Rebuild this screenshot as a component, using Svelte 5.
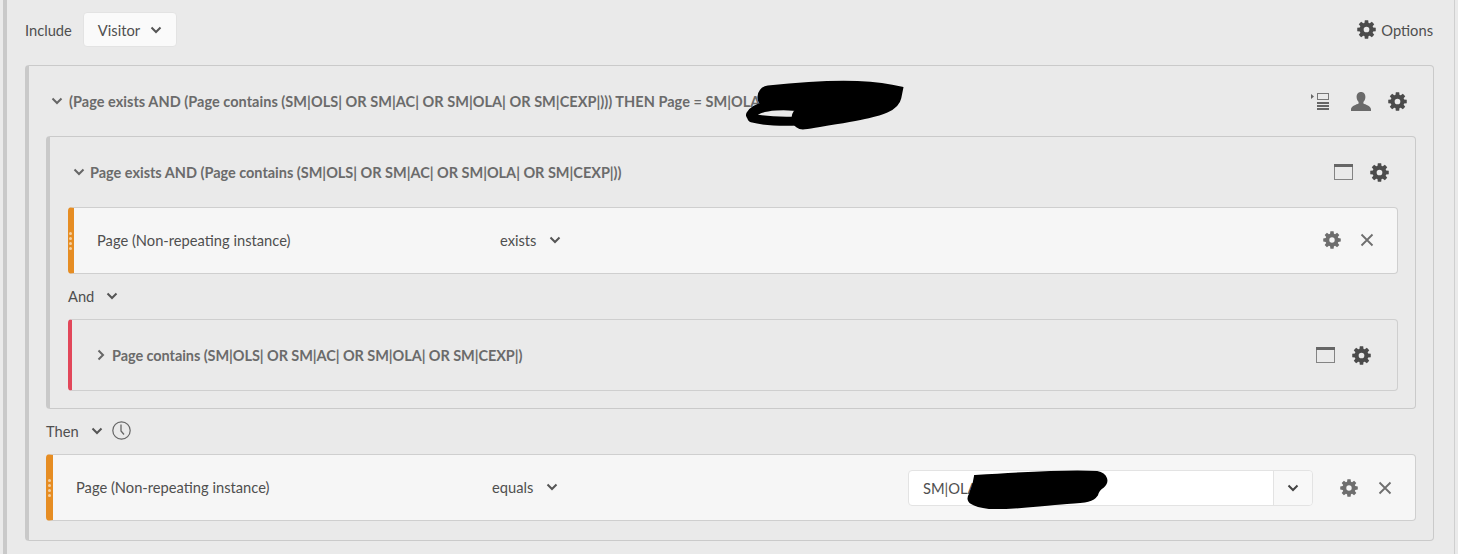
<script lang="ts">
  // 8 tooth gear with a hole, on a 20 unit box
  function gearPath() {
    const pts = [];
    for (let i = 0; i < 8; i++) {
      const a = (i * Math.PI) / 4;
      const step = [[-0.3, 7.3], [-0.18, 9.9], [0.18, 9.9], [0.3, 7.3]];
      for (const [da, r] of step) {
        pts.push(`${(10 + r * Math.sin(a + da)).toFixed(2)} ${(10 - r * Math.cos(a + da)).toFixed(2)}`);
      }
    }
    return `M${pts.join("L")}Z M10 7a3 3 0 1 0 0 6a3 3 0 1 0 0-6Z`;
  }
  const gear = gearPath();
  const longTitle = "(Page exists AND (Page contains (SM|OLS| OR SM|AC| OR SM|OLA| OR SM|CEXP|))) THEN Page = SM|OLA";
  const midTitle = "Page exists AND (Page contains (SM|OLS| OR SM|AC| OR SM|OLA| OR SM|CEXP|))";
  const subTitle = "Page contains (SM|OLS| OR SM|AC| OR SM|OLA| OR SM|CEXP|)";
</script>

{#snippet gearIcon(size, color)}
  <svg class="icon" width={size} height={size} viewBox="0 0 20 20"><path d={gear} fill={color} fill-rule="evenodd" /></svg>
{/snippet}

{#snippet chevron(w = 12, color = "#555")}
  <svg class="icon" width={w} height="8" viewBox="0 0 12 8"><path d="M1.5 1.5 6 6l4.5-4.5" fill="none" stroke={color} stroke-width="2" /></svg>
{/snippet}

{#snippet closeIcon()}
  <svg class="icon" width="14" height="14" viewBox="0 0 14 14"><path d="M1.5 1.5l11 11M12.5 1.5l-11 11" fill="none" stroke="#6e6e6e" stroke-width="1.8" /></svg>
{/snippet}

{#snippet windowIcon()}
  <svg class="icon" width="19" height="16" viewBox="0 0 19 16"><rect x="0.5" y="0.5" width="18" height="15" fill="none" stroke="#848484" /><rect x="0" y="0" width="19" height="3" fill="#666" /></svg>
{/snippet}

{#snippet grip()}
  <span class="grip"><i></i><i></i><i></i><i></i></span>
{/snippet}

<div class="shell">
  <header class="top">
    <span class="label include">Include</span>
    <button class="select">Visitor {@render chevron()}</button>
    <span class="options">{@render gearIcon(19, "#4b4b4b")} Options</span>
  </header>

  <section class="sequence">
    <div class="head outer-head">
      {@render chevron(12, "#666")}
      <span class="title long">{longTitle}</span>
      <span class="tools">
        <svg class="icon list-icon" width="19" height="19" viewBox="0 0 19 19">
          <path d="M0 2l3 2.5L0 7z" fill="#666" />
          <rect x="6.5" y="1.5" width="11" height="6" fill="none" stroke="#777" />
          <path d="M6 11h12M6 14h12M6 17h12" stroke="#666" stroke-width="2" />
        </svg>
        <svg class="icon" width="20" height="19" viewBox="0 0 20 19">
          <path d="M10 0c3 0 4.400 2.300 4.400 5 0 2.300-1 4-2 5v1.500c2 1 7.600 2.500 7.600 6V19H0v-1.500c0-3.500 5.600-5 7.600-6V10c-1-1-2-2.700-2-5C5.600 2.300 7 0 10 0z" fill="#6a6a6a" />
        </svg>
        {@render gearIcon(19, "#4b4b4b")}
      </span>
    </div>

    <div class="group">
      <div class="head mid-head">
        {@render chevron(12, "#666")}
        <span class="title">{midTitle}</span>
        <span class="tools">{@render windowIcon()}{@render gearIcon(19, "#4b4b4b")}</span>
      </div>

      <div class="row first">
        {@render grip()}
        <span class="name">Page (Non-repeating instance)</span>
        <span class="op">exists {@render chevron()}</span>
        <span class="tools row-tools">{@render gearIcon(18, "#6e6e6e")}{@render closeIcon()}</span>
      </div>

      <div class="joiner"><span class="label">And</span>{@render chevron()}</div>

      <div class="subgroup">
        <svg class="icon" width="8" height="12" viewBox="0 0 8 12"><path d="M1.500 1.500 6 6l-4.500 4.500" fill="none" stroke="#666" stroke-width="2" /></svg>
        <span class="title sub">{subTitle}</span>
        <span class="tools">{@render windowIcon()}{@render gearIcon(19, "#4b4b4b")}</span>
      </div>
    </div>

    <div class="then">
      <span class="label">Then</span>
      <span class="then-chevron">{@render chevron()}</span>
      <svg class="icon" width="19" height="19" viewBox="0 0 19 19"><circle cx="9.500" cy="9.500" r="8.700" fill="none" stroke="#666" stroke-width="1.200" /><path d="M9 3.500v6.500l3 3.500" fill="none" stroke="#666" stroke-width="1.300" /></svg>
    </div>

    <div class="row last">
      {@render grip()}
      <span class="name">Page (Non-repeating instance)</span>
      <span class="op">equals {@render chevron()}</span>
      <span class="combo">
        <span class="value">SM|OLA</span>
        <span class="combo-btn">{@render chevron(12, "#444")}</span>
      </span>
      <span class="tools row-tools">{@render gearIcon(18, "#6e6e6e")}{@render closeIcon()}</span>
    </div>
  </section>

  <!-- redaction scribbles drawn over the screenshot -->
  <svg class="scribble" width="1458" height="554" viewBox="0 0 1458 554">
    <path d="M769 97C815 92 860 90 890 96 888 106 840 112 803 118" fill="none" stroke="#000" stroke-width="23" stroke-linecap="round" />
    <path d="M751 115C758 103 790 104 812 108" fill="none" stroke="#000" stroke-width="10" stroke-linecap="round" />
    <path d="M752 118C775 124 800 120 815 121" fill="none" stroke="#000" stroke-width="9" stroke-linecap="round" />
    <path d="M975 476c30-2 90-6 122-4 10 2 12 10 6 15-3 2-5 4-6 8-4 6-10 7-30 8-30 2-50 6-78 5-16-2-24-6-19-14 2-6 4-10 5-18z" fill="#000" stroke="#000" stroke-width="2" />
  </svg>
</div>

<style>
  :global(body) {
    margin: 0;
    background: #eaeaea;
    overflow: hidden;
  }
  .shell {
    position: relative;
    box-sizing: border-box;
    width: 1452px;
    height: 554px;
    margin-left: 3px;
    padding: 0 20px 0 18px;
    border-left: 4px solid #c9c9c9;
    border-right: 1px solid #cfcfcf;
    font-family: Lato, sans-serif;
    font-size: 14.7px;
    color: #4f4f4f;
  }
  .icon {
    display: block;
    flex: none;
  }
  .top {
    display: flex;
    align-items: center;
    height: 65px;
    padding-bottom: 6px;
    box-sizing: border-box;
  }
  .select {
    display: flex;
    align-items: center;
    gap: 10px;
    height: 35px;
    margin-left: 11px;
    padding: 0 14px;
    background: #fafafa;
    border: 1px solid #e3e3e3;
    border-radius: 4px;
    font: inherit;
    color: inherit;
  }
  .options {
    display: flex;
    align-items: center;
    gap: 5px;
    margin-left: auto;
    margin-right: 1px;
  }
  .sequence {
    box-sizing: border-box;
    height: 476px;
    padding: 0 17px 0 17px;
    border: 1px solid #cacaca;
    border-left: 4px solid #c9c9c9;
    border-radius: 4px;
  }
  .head {
    display: flex;
    align-items: center;
  }
  .outer-head {
    height: 70px;
    padding: 0 9px 0 5px;
    gap: 6px;
  }
  .title {
    font-size: 14.5px;
    font-weight: 700;
    letter-spacing: -0.02px;
    color: #6b6b6b;
    white-space: nowrap;
  }
  .long {
    letter-spacing: 0.03px;
  }
  .sub {
    letter-spacing: -0.07px;
  }
  .tools {
    display: flex;
    align-items: center;
    gap: 17px;
    margin-left: auto;
  }
  .list-icon {
    margin-right: 4px;
  }
  .group {
    box-sizing: border-box;
    height: 273px;
    padding: 0 17px 0 18px;
    border: 1px solid #cacaca;
    border-left: 4px solid #c9c9c9;
    border-radius: 4px;
  }
  .mid-head {
    height: 70px;
    padding: 0 9px 0 5px;
    gap: 5px;
  }
  .row {
    position: relative;
    display: flex;
    align-items: center;
    box-sizing: border-box;
    height: 67px;
    background: #f6f6f6;
    border: 1px solid #cfcfcf;
    border-left: 6px solid #e68d23;
    border-radius: 4px;
  }
  .first {
    padding-bottom: 2px;
  }
  .last {
    border-left-width: 7px;
  }
  .grip {
    position: absolute;
    left: -5px;
    top: 50%;
    transform: translateY(-50%);
    display: flex;
    flex-direction: column;
    gap: 2px;
  }
  .grip i {
    width: 3px;
    height: 3px;
    border-radius: 50%;
    background: #f3cfa0;
  }
  .name {
    white-space: nowrap;
  }
  .first .name {
    margin-left: 23px;
    width: 403px;
  }
  .last .name {
    margin-left: 23px;
    width: 416px;
    padding-bottom: 2px;
  }
  .op {
    display: flex;
    align-items: center;
    gap: 13px;
  }
  .last .op {
    padding-bottom: 2px;
  }
  .row-tools {
    gap: 19px;
    padding-right: 23px;
  }
  .joiner {
    display: flex;
    align-items: center;
    gap: 12px;
    height: 45px;
    padding-bottom: 2px;
    box-sizing: border-box;
  }
  .subgroup {
    display: flex;
    align-items: center;
    gap: 7px;
    box-sizing: border-box;
    height: 72px;
    padding: 0 26px 0 25px;
    border: 1px solid #cfcfcf;
    border-left: 4px solid #e2475a;
    border-radius: 4px;
  }
  .then {
    display: flex;
    align-items: center;
    gap: 9px;
    height: 45px;
    padding-bottom: 2px;
    box-sizing: border-box;
  }
  .then-chevron {
    margin-left: 3px;
  }
  .combo {
    display: flex;
    align-items: stretch;
    box-sizing: border-box;
    width: 405px;
    height: 36px;
    margin-left: auto;
    background: #fff;
    border: 1px solid #e3e3e3;
    border-radius: 4px;
  }
  .last .row-tools {
    gap: 20px;
    margin-left: 27px;
  }
  .value {
    flex: 1;
    padding-left: 14px;
    line-height: 34px;
  }
  .combo-btn {
    display: flex;
    align-items: center;
    justify-content: center;
    width: 38px;
    background: #f8f8f8;
    border-left: 1px solid #e3e3e3;
    border-radius: 0 4px 4px 0;
  }
  .scribble {
    position: absolute;
    left: -7px;
    top: 0;
    pointer-events: none;
  }
</style>
